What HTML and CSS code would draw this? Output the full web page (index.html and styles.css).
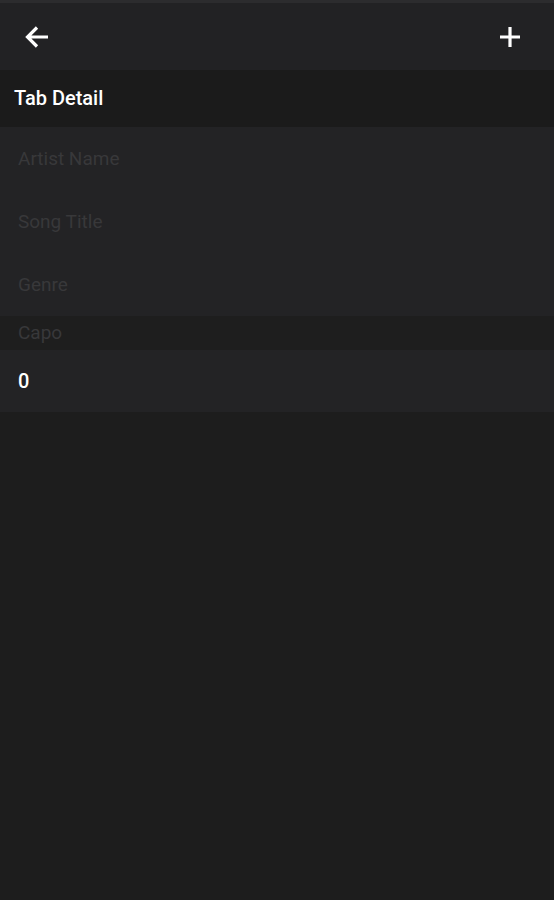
FILE: index.html
```html
<!DOCTYPE html>
<html>
<head>
    <title>Tab Detail</title>
    <link rel="stylesheet" href="styles.css">
</head>
<body>
    <div class="toolbar">
        <button class="icon-btn" aria-label="Back">
            <svg width="36" height="36" viewBox="0 0 36 36"><path d="M29 18H9M18 8.5L8.5 18l9.5 9.5" fill="none" stroke="#fff" stroke-width="3.2"/></svg>
        </button>
        <button class="icon-btn" aria-label="Add">
            <svg width="36" height="36" viewBox="0 0 36 36"><path d="M18 8v20M8 18h20" fill="none" stroke="#fff" stroke-width="3.2"/></svg>
        </button>
    </div>
    <div class="section-title">Tab Detail</div>
    <form class="fields">
        <input type="text" placeholder="Artist Name">
        <input type="text" placeholder="Song Title">
        <input type="text" placeholder="Genre">
    </form>
    <div class="field-label">Capo</div>
    <div class="fields">
        <input type="text" class="value" value="0">
    </div>
</body>
</html>
```

FILE: styles.css
```css
body {
    margin: 0;
    background-color: #1d1d1d;
    font-family: Roboto, "Liberation Sans", sans-serif;
    color: #fff;
}
.toolbar {
    height: 67px;
    border-top: 3px solid #2c2c2e;
    background-color: #222224;
    display: flex;
    align-items: center;
    justify-content: space-between;
    padding: 0 26px 0 19px;
}
.icon-btn {
    background: none;
    border: none;
    padding: 0;
    width: 36px;
    height: 36px;
    display: flex;
    align-items: center;
    justify-content: center;
    cursor: pointer;
}
.section-title {
    height: 57px;
    line-height: 57px;
    padding-left: 14px;
    background-color: #1b1b1b;
    font-size: 20px;
    font-weight: 500;
}
.fields {
    margin: 0;
    background-color: #232325;
}
.fields input {
    display: block;
    width: 100%;
    height: 63px;
    box-sizing: border-box;
    padding: 0 18px;
    border: none;
    background: transparent;
    font-family: inherit;
    font-size: 19px;
    color: #fff;
    outline: none;
}
.fields input::placeholder {
    color: #38383a;
}
.fields .value {
    height: 62px;
    font-size: 20px;
    font-weight: 500;
}
.field-label {
    height: 34px;
    line-height: 34px;
    padding-left: 18px;
    background-color: #1e1e1e;
    color: #38383a;
    font-size: 19px;
}
```
